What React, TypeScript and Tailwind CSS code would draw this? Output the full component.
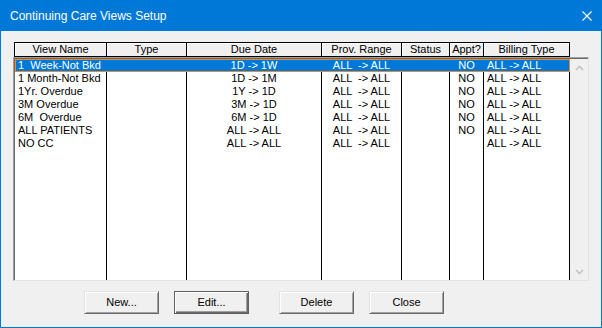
const columns = [
  { title: 'View Name', head: 'w-[93px] border-l', body: 'w-[92px] pl-[3px] text-left' },
  { title: 'Type', head: 'w-[80px]', body: 'w-[80px] text-center' },
  { title: 'Due Date', head: 'w-[135px]', body: 'w-[135px] text-center' },
  { title: 'Prov. Range', head: 'w-[80px]', body: 'w-[80px] text-center' },
  { title: 'Status', head: 'w-[48px]', body: 'w-[48px] text-center' },
  { title: 'Appt?', head: 'w-[34px]', body: 'w-[34px] text-center' },
  { title: 'Billing Type', head: 'w-[86px]', body: 'w-[86px] pl-[3px] text-left' },
];

const rows = [
  ['1  Week-Not Bkd', '', '1D -> 1W', 'ALL  -> ALL', '', 'NO', 'ALL -> ALL'],
  ['1 Month-Not Bkd', '', '1D -> 1M', 'ALL  -> ALL', '', 'NO', 'ALL -> ALL'],
  ['1Yr. Overdue', '', '1Y -> 1D', 'ALL  -> ALL', '', 'NO', 'ALL -> ALL'],
  ['3M Overdue', '', '3M -> 1D', 'ALL  -> ALL', '', 'NO', 'ALL -> ALL'],
  ['6M  Overdue', '', '6M -> 1D', 'ALL  -> ALL', '', 'NO', 'ALL -> ALL'],
  ['ALL PATIENTS', '', 'ALL -> ALL', 'ALL  -> ALL', '', 'NO', 'ALL -> ALL'],
  ['NO CC', '', 'ALL -> ALL', 'ALL  -> ALL', '', '', 'ALL -> ALL'],
];

function Chevron({ up }: { up?: boolean }) {
  return (
    <svg width="9" height="6" viewBox="0 0 9 6">
      <polyline
        points={up ? '1,5 4.5,1.5 8,5' : '1,1 4.5,4.5 8,1'}
        fill="none"
        stroke="#c4c4c4"
        strokeWidth="1.6"
      />
    </svg>
  );
}

function Button({ label, isDefault }: { label: string; isDefault?: boolean }) {
  return (
    <div
      className={
        isDefault
          ? 'w-[75px] h-[23px] flex items-center justify-center bg-[#f0f0f0] border border-[#5f5f5f] shadow-[inset_1px_1px_0_#fff,inset_-1px_-1px_0_#696969,inset_-2px_-2px_0_#a0a0a0]'
          : 'w-[75px] h-[23px] flex items-center justify-center bg-[#f0f0f0] border border-t-[#e3e3e3] border-l-[#e3e3e3] border-r-[#696969] border-b-[#696969] shadow-[inset_1px_1px_0_#fff,inset_-1px_-1px_0_#a0a0a0]'
      }
    >
      {label}
    </div>
  );
}

export default function App() {
  return (
    <div className="w-[602px] h-[328px] flex flex-col bg-[#f0f0f0] border-x border-b border-[#0078d7] font-['Liberation_Sans',Arial,sans-serif] text-[11px] text-black">
      {/* title bar */}
      <div className="h-[31px] shrink-0 bg-[#0078d7] flex items-center justify-between pl-[9px] pr-[9px] text-white text-[12px]">
        <span className="leading-none pt-[1px]">Continuing Care Views Setup</span>
        <svg width="10" height="10" viewBox="0 0 10 10">
          <path d="M0.5 0.5 L9.5 9.5 M9.5 0.5 L0.5 9.5" stroke="#fff" strokeWidth="1.1" />
        </svg>
      </div>

      <div className="flex flex-col pl-[12px] pt-[11px]">
        {/* column headers */}
        <div className="flex ml-[1px] h-[15px]">
          {columns.map((c) => (
            <div
              key={c.title}
              className={`${c.head} shrink-0 h-[15px] border-t border-b border-r border-black bg-[#f0f0f0] shadow-[inset_1px_1px_0_#fff] flex items-center justify-center leading-none whitespace-nowrap overflow-hidden`}
            >
              {c.title}
            </div>
          ))}
        </div>

        {/* list box */}
        <div className="w-[576px] h-[224px] flex border-l border-t border-l-[#a0a0a0] border-t-[#a0a0a0] border-r border-b border-r-[#e3e3e3] border-b-[#e3e3e3]">
          <div className="flex-1 flex border-l border-t border-[#696969]">
            <div className="w-[555px] flex flex-col bg-white">
              {rows.map((r, i) => (
                <div
                  key={i}
                  className={
                    i === 0
                      ? 'h-[13px] flex bg-[#0078d7] text-white shadow-[inset_0_0_0_1px_#e8892c]'
                      : 'h-[13px] flex'
                  }
                >
                  {r.map((v, j) => (
                    <div
                      key={j}
                      className={`${columns[j].body} shrink-0 h-full border-r ${i === 0 ? 'border-transparent' : 'border-black'} whitespace-pre leading-[13px] overflow-hidden`}
                    >
                      {v}
                    </div>
                  ))}
                </div>
              ))}
              <div className="flex-1 flex">
                {columns.map((c) => (
                  <div key={c.title} className={`${c.body} shrink-0 h-full border-r border-black`} />
                ))}
              </div>
            </div>
            {/* scrollbar */}
            <div className="flex-1 flex flex-col justify-between bg-[#f0f0f0]">
              <div className="h-[17px] flex items-center justify-center">
                <Chevron up />
              </div>
              <div className="h-[17px] flex items-center justify-center">
                <Chevron />
              </div>
            </div>
          </div>
        </div>

        {/* buttons */}
        <div className="flex mt-[10px] ml-[71px]">
          <Button label="New..." />
          <div className="ml-[15px]">
            <Button label="Edit..." isDefault />
          </div>
          <div className="ml-[30px]">
            <Button label="Delete" />
          </div>
          <div className="ml-[15px]">
            <Button label="Close" />
          </div>
        </div>
      </div>
    </div>
  );
}
